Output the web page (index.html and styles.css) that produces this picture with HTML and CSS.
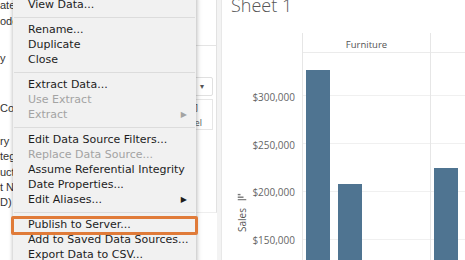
FILE: index.html
```html
<!DOCTYPE html>
<html>
<head>
<meta charset="utf-8">
<link rel="stylesheet" href="styles.css">
</head>
<body>
<div class="app">
  <div class="side">
    <div class="data-pane">
      <div class="dp-row r0">ate</div>
      <div class="dp-row r1">ode</div>
      <div class="dp-row r2">y</div>
      <div class="dp-row r3">Coc</div>
      <div class="dp-row r4">ry</div>
      <div class="dp-row">teg</div>
      <div class="dp-row">uct</div>
      <div class="dp-row">t N</div>
      <div class="dp-row">D)</div>
    </div>
    <div class="marks">
      <div class="mk-top"></div>
      <div class="mk-title"></div>
      <div class="mk-drop"><span class="caret">▾</span></div>
      <div class="mk-buttons"><span class="mk-a">]</span><span class="mk-b">el</span></div>
    </div>
    <div class="gutter"></div>
  </div>

  <div class="sheet">
    <div class="sheet-title">Sheet 1</div>
    <div class="viz">
      <div class="axis">
        <div class="axis-title">
          <svg class="sort-ico" width="8" height="9" viewBox="0 0 8 9"><rect x="0" y="0" width="1.4" height="9" fill="#777"/><rect x="2.6" y="0" width="1.4" height="6" fill="#777"/><rect x="5.2" y="0" width="1.4" height="3" fill="#777"/></svg>
          <span class="axis-name">Sales</span>
        </div>
        <div class="axis-labels">
          <div class="tick">$300,000</div>
          <div class="tick">$250,000</div>
          <div class="tick">$200,000</div>
          <div class="tick">$150,000</div>
        </div>
      </div>
      <div class="panes">
        <div class="pane first">
          <div class="pane-head">Furniture</div>
          <div class="plot">
            <div class="bar" style="height:190px"></div>
            <div class="bar" style="height:76px"></div>
            <div class="bar" style="height:0px"></div>
            <div class="bar" style="height:0px"></div>
          </div>
        </div>
        <div class="pane wide">
          <div class="pane-head"></div>
          <div class="plot">
            <div class="bar" style="height:92px"></div>
            <div class="bar" style="height:70px"></div>
          </div>
        </div>
      </div>
    </div>
  </div>

  <div class="menu">
    <div class="mi">View Data...</div>
    <div class="sep"></div>
    <div class="mi">Rename...</div>
    <div class="mi">Duplicate</div>
    <div class="mi">Close</div>
    <div class="sep"></div>
    <div class="mi">Extract Data...</div>
    <div class="mi dis">Use Extract</div>
    <div class="mi dis sub">Extract<span class="arrow">▶</span></div>
    <div class="sep"></div>
    <div class="mi">Edit Data Source Filters...</div>
    <div class="mi dis">Replace Data Source...</div>
    <div class="mi">Assume Referential Integrity</div>
    <div class="mi">Date Properties...</div>
    <div class="mi sub">Edit Aliases...<span class="arrow">▶</span></div>
    <div class="sep"></div>
    <div class="mi hl">Publish to Server...</div>
    <div class="mi">Add to Saved Data Sources...</div>
    <div class="mi">Export Data to CSV...</div>
  </div>
</div>
</body>
</html>
```

FILE: styles.css
```css
* { box-sizing: border-box; }
html, body { margin: 0; padding: 0; }
body {
  width: 465px;
  height: 260px;
  overflow: hidden;
  background: #fff;
  font-family: "DejaVu Sans", "Liberation Sans", sans-serif;
}
.app {
  position: relative;
  display: flex;
  width: 465px;
  height: 260px;
  overflow: hidden;
}

/* left side */
.side {
  display: flex;
  width: 222px;
  flex: none;
  height: 260px;
}
.data-pane {
  width: 160px;
  flex: none;
  background: #fff;
  font-family: "Liberation Sans", sans-serif;
  font-size: 11px;
  color: #333;
}
.dp-row { height: 15.3px; line-height: 15px; white-space: nowrap; }
.dp-row.r0 { margin-top: -2px; }
.dp-row.r1 { margin-top: 1px; }
.dp-row.r2 { margin-top: 21px; }
.dp-row.r3 { margin-top: 35px; }
.dp-row.r4 { margin-top: 18px; }

.marks {
  width: 57px;
  flex: none;
  height: 213px;
  background: #fff;
  border-right: 1px solid #e2e2e2;
  border-bottom: 1px solid #eee;
  display: flex;
  flex-direction: column;
  padding-left: 6px;
}
.mk-top {
  height: 46px;
  flex: none;
  margin-left: -6px;
  border-bottom: 1px solid #e4e4e4;
}
.mk-title { height: 31px; flex: none; }
.mk-drop {
  height: 19px;
  flex: none;
  margin-right: 3px;
  border: 1px solid #e0e0e0;
  border-radius: 2px;
  font-size: 8px;
  color: #555;
  text-align: right;
  padding-right: 8px;
  line-height: 17px;
}
.mk-buttons {
  margin-top: 3px;
  height: 31px;
  flex: none;
  margin-right: 3px;
  border: 1px solid #e6e6e6;
  font-size: 9px;
  color: #555;
  display: flex;
  flex-direction: column;
  align-items: flex-end;
  padding-right: 14px;
  line-height: 12px;
  padding-top: 2px;
}
.mk-b { font-size: 8px; margin-right: -4px; margin-top: 4px; }
.gutter {
  width: 5px;
  flex: none;
  background: #f3f3f3;
  border-right: 1px solid #e8e8e8;
}

/* sheet */
.sheet {
  flex: 1;
  display: flex;
  flex-direction: column;
  min-width: 0;
  height: 260px;
}
.sheet-title {
  flex: none;
  font-family: "Open Sans", sans-serif;
  font-weight: 300;
  font-size: 18px;
  color: #555;
  margin-top: -7px;
  padding-left: 9px;
  height: 40px;
  line-height: 24px;
  white-space: nowrap;
}
.viz {
  display: flex;
  flex: 1;
  min-height: 0;
  overflow: hidden;
}
.axis {
  width: 80px;
  flex: none;
  display: flex;
  padding-top: 20px;
}
.axis-title {
  width: 28px;
  flex: none;
  display: flex;
  flex-direction: column;
  align-items: center;
  padding-top: 139px;
  padding-left: 12px;
}
.sort-ico { transform: rotate(-90deg); flex: none; }
.axis-name {
  writing-mode: vertical-rl;
  transform: rotate(180deg);
  font-family: "Open Sans", sans-serif;
  font-size: 10px;
  color: #555;
  margin-top: 7px;
  line-height: 10px;
}
.axis-labels {
  flex: 1;
  padding-top: 21px;
  padding-right: 7px;
  text-align: right;
  font-family: "Open Sans", sans-serif;
  font-size: 10px;
  color: #666;
}
.tick { height: 47.7px; line-height: 47.7px; }

.panes {
  flex: 1;
  display: flex;
  min-width: 0;
}
.pane {
  width: 128px;
  flex: none;
  border-left: 1px solid #e6e6e6;
  display: flex;
  flex-direction: column;
}
.pane.wide { width: 160px; }
.pane-head {
  flex: none;
  height: 20px;
  line-height: 24px;
  border-bottom: 1px solid #ebebeb;
  text-align: center;
  font-family: "Open Sans", sans-serif;
  font-size: 9.5px;
  color: #555;
  white-space: nowrap;
  overflow: hidden;
}
.plot {
  flex: 1;
  min-height: 0;
  display: flex;
  align-items: flex-end;
  gap: 8px;
  padding-left: 3px;
  background-image: repeating-linear-gradient(to bottom, transparent 0 42.5px, #f0f0f0 42.5px 43.5px, transparent 43.5px 47.7px);
}
.bar {
  width: 24px;
  flex: none;
  background: #4f7491;
}

/* context menu */
.menu {
  position: absolute;
  left: 13px;
  top: -7px;
  width: 183px;
  padding: 4px 0;
  background: #f1f1f1;
  box-shadow: 0 0 4px rgba(0, 0, 0, 0.22), 1px 2px 6px rgba(0, 0, 0, 0.15);
  font-family: "DejaVu Sans", sans-serif;
  font-size: 11px;
  color: #1d1d1d;
}
.mi {
  height: 15px;
  line-height: 15px;
  padding-left: 15px;
  white-space: nowrap;
  position: relative;
}
.mi.dis { color: #a3a3a3; }
.sep {
  height: 10px;
  position: relative;
}
.sep::after {
  content: "";
  position: absolute;
  left: 1px;
  right: 1px;
  top: 5px;
  height: 1px;
  background: #dcdcdc;
}
.arrow {
  position: absolute;
  right: 9px;
  top: 0;
  font-size: 8px;
  line-height: 15px;
}
.hl::after {
  content: "";
  position: absolute;
  left: -2px;
  right: -2px;
  top: -1px;
  bottom: -3px;
  border: 3px solid #e07b39;
  border-radius: 2px;
}
```
